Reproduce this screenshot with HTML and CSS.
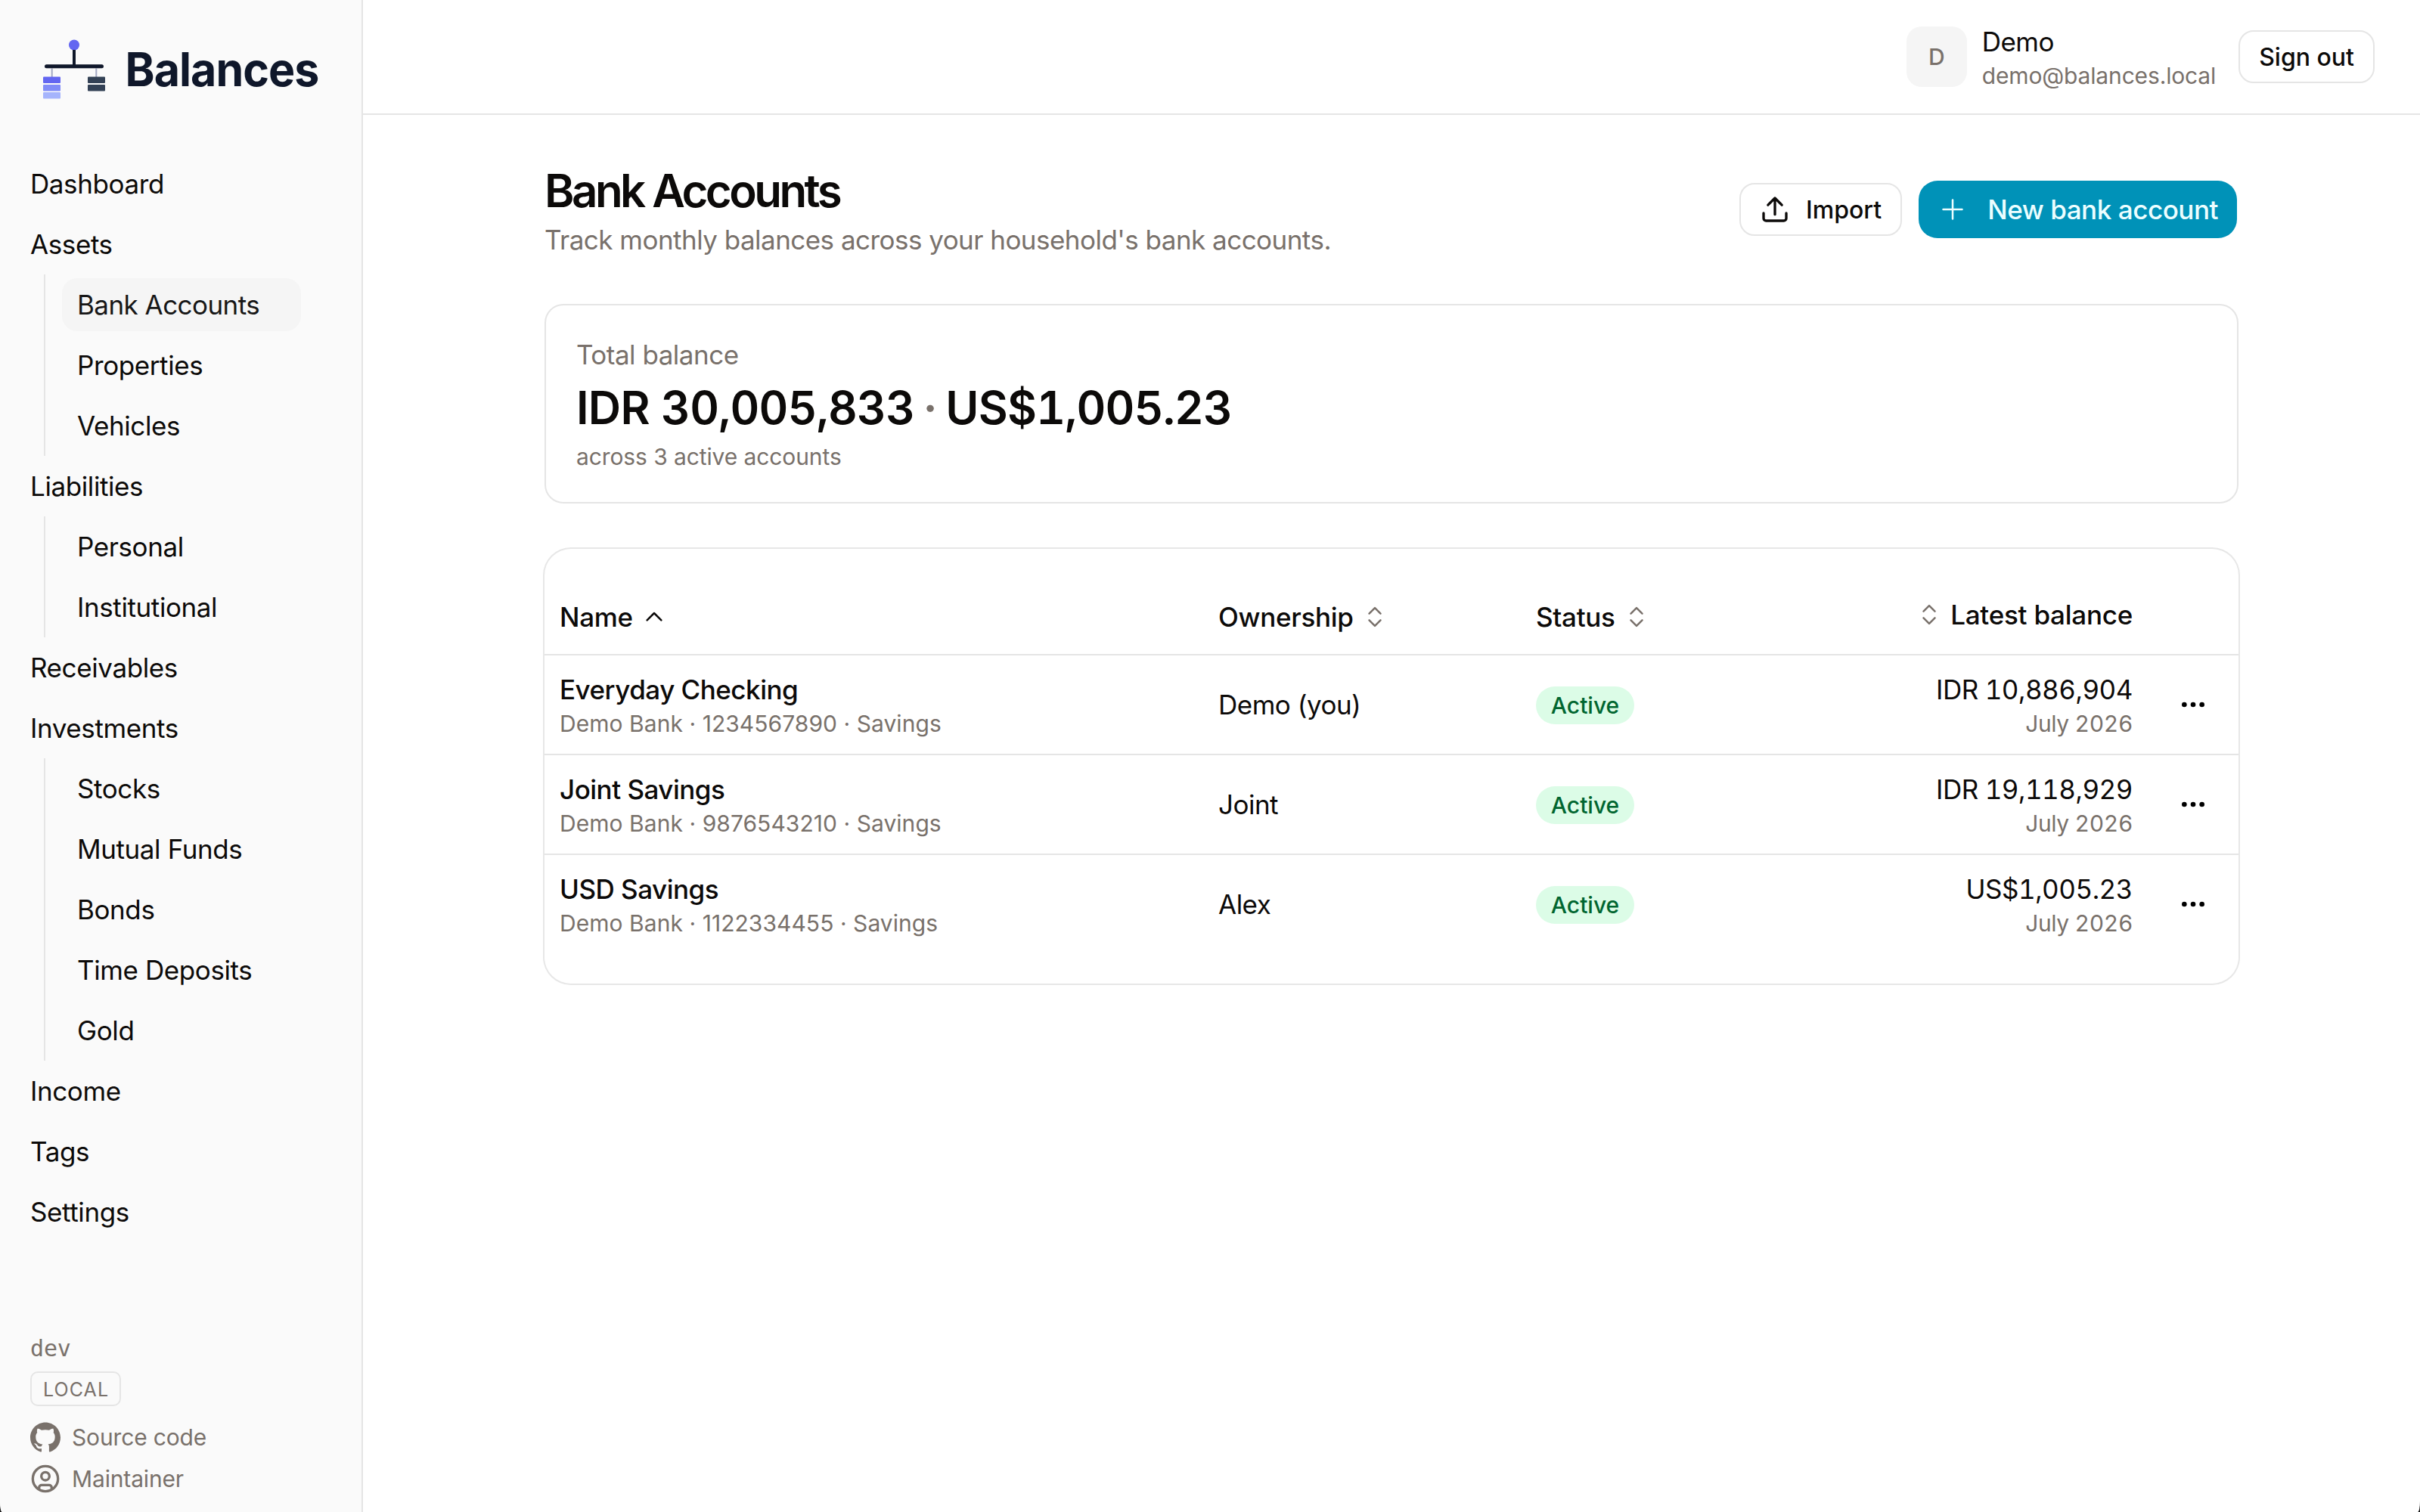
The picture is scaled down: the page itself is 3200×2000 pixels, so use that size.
FILE: index.html
```
<!DOCTYPE html>
<html lang="en">
<head>
  <meta charset="UTF-8" />
  <meta name="viewport" content="width=device-width, initial-scale=1" />
  <title>Bank Accounts - Balances</title>
  <link rel="stylesheet" href="styles.css">
</head>
<body>
  <aside class="sidebar">
    <a class="brand" href="#">
      <svg class="brand-logo" viewBox="0 0 400 90">
        <circle cx="53" cy="14.500" r="7" fill="#6366f1" />
        <path d="M53 21V44" stroke="#0f172a" stroke-width="4" />
        <path d="M23.700 45.500V58M82.300 45.500V58" stroke="#a3a8c3" stroke-width="2" />
        <path d="M16.500 42.700H89.500" stroke="#0f172a" stroke-width="5" stroke-linecap="round" />
        <rect x="12" y="56.500" width="23" height="8.500" rx="1" fill="#6366f1" />
        <rect x="12" y="67" width="23" height="8.500" rx="1" fill="#818cf8" />
        <rect x="12" y="77" width="23" height="8.500" rx="1" fill="#a5b4fc" />
        <rect x="71" y="56.500" width="23" height="8.500" rx="1" fill="#334155" />
        <rect x="71" y="67" width="23" height="8.500" rx="1" fill="#334155" />
        <text class="brand-name" x="120.500" y="69" textLength="256" lengthAdjust="spacingAndGlyphs">Balances</text>
      </svg>
    </a>

    <nav class="nav">
      <a href="#">Dashboard</a>
      <a href="#">Assets</a>
      <div class="subnav">
        <a class="active" href="#">Bank Accounts</a>
        <a href="#">Properties</a>
        <a href="#">Vehicles</a>
      </div>
      <a href="#">Liabilities</a>
      <div class="subnav">
        <a href="#">Personal</a>
        <a href="#">Institutional</a>
      </div>
      <a href="#">Receivables</a>
      <a href="#">Investments</a>
      <div class="subnav">
        <a href="#">Stocks</a>
        <a href="#">Mutual Funds</a>
        <a href="#">Bonds</a>
        <a href="#">Time Deposits</a>
        <a href="#">Gold</a>
      </div>
      <a href="#">Income</a>
      <a href="#">Tags</a>
      <a href="#">Settings</a>
    </nav>

    <div class="sidebar-footer">
      <span class="version">dev</span>
      <span class="env">LOCAL</span>
      <a href="#">
        <svg class="icon" viewBox="0 0 24 24" fill="currentColor"><path d="M12 .297c-6.630 0-12 5.373-12 12 0 5.303 3.438 9.800 8.205 11.385.600.113.820-.258.820-.577 0-.285-.010-1.040-.015-2.040-3.338.724-4.042-1.610-4.042-1.610C4.422 18.070 3.633 17.700 3.633 17.700c-1.087-.744.084-.729.084-.729 1.205.084 1.838 1.236 1.838 1.236 1.070 1.835 2.809 1.305 3.495.998.108-.776.417-1.305.760-1.605-2.665-.300-5.466-1.332-5.466-5.930 0-1.310.465-2.380 1.235-3.220-.135-.303-.540-1.523.105-3.176 0 0 1.005-.322 3.300 1.230.960-.267 1.980-.399 3-.405 1.020.006 2.040.138 3 .405 2.280-1.552 3.285-1.230 3.285-1.230.645 1.653.240 2.873.120 3.176.765.840 1.230 1.910 1.230 3.220 0 4.610-2.805 5.625-5.475 5.920.420.360.810 1.096.810 2.220 0 1.606-.015 2.896-.015 3.286 0 .315.210.690.825.570C20.565 22.092 24 17.592 24 12.297c0-6.627-5.373-12-12-12" /></svg>
        Source code
      </a>
      <a href="#">
        <svg class="icon" viewBox="0 0 24 24" fill="none" stroke="currentColor" stroke-width="2"><circle cx="12" cy="12" r="10" /><circle cx="12" cy="10" r="3.200" /><path d="M7 20.400V19a2 2 0 0 1 2-2h6a2 2 0 0 1 2 2v1.400" /></svg>
        Maintainer
      </a>
    </div>
  </aside>

  <div class="page">
    <header class="topbar">
      <div class="avatar">D</div>
      <div class="user">
        <div class="user-name">Demo</div>
        <div class="user-email">demo@balances.local</div>
      </div>
      <button class="btn">Sign out</button>
    </header>

    <main>
      <div class="page-header">
        <div>
          <h1>Bank Accounts</h1>
          <p>Track monthly balances across your household's bank accounts.</p>
        </div>
        <div class="actions">
          <button class="btn btn-import">
            <svg class="icon" viewBox="0 0 24 24" fill="none" stroke="currentColor" stroke-width="2" stroke-linecap="round" stroke-linejoin="round"><path d="M12 16V3.500M6.500 8.500 12 3l5.500 5.500M21 15v4a2 2 0 0 1-2 2H5a2 2 0 0 1-2-2v-4" /></svg>
            Import
          </button>
          <button class="btn btn-primary">
            <svg class="icon" viewBox="0 0 24 24" fill="none" stroke="currentColor" stroke-width="1.500" stroke-linecap="round"><path d="M12 4.500v15M4.500 12h15" /></svg>
            New bank account
          </button>
        </div>
      </div>

      <section class="summary">
        <div class="summary-label">Total balance</div>
        <div class="summary-total">IDR 30,005,833 <span>·</span> US$1,005.23</div>
        <div class="summary-note">across 3 active accounts</div>
      </section>

      <section class="accounts">
        <table>
          <colgroup>
            <col class="col-name">
            <col class="col-owner">
            <col class="col-status">
            <col class="col-balance">
            <col class="col-menu">
          </colgroup>
          <thead>
            <tr>
              <th><span class="sort">Name <svg class="sort-icon" viewBox="0 0 24 24"><path d="m4.500 15.500 7.500-7.500 7.500 7.500" /></svg></span></th>
              <th><span class="sort">Ownership <svg class="sort-icon muted" viewBox="0 0 24 24"><path d="m6 8.500 6-6 6 6M6 15.500l6 6 6-6" /></svg></span></th>
              <th><span class="sort">Status <svg class="sort-icon muted" viewBox="0 0 24 24"><path d="m6 8.500 6-6 6 6M6 15.500l6 6 6-6" /></svg></span></th>
              <th class="num"><span class="sort"><svg class="sort-icon muted" viewBox="0 0 24 24"><path d="m6 8.500 6-6 6 6M6 15.500l6 6 6-6" /></svg> Latest balance</span></th>
              <th></th>
            </tr>
          </thead>
          <tbody>
            <tr>
              <td><div class="account">Everyday Checking</div><div class="detail">Demo Bank · 1234567890 · Savings</div></td>
              <td>Demo (you)</td>
              <td><span class="badge">Active</span></td>
              <td class="num"><div>IDR 10,886,904</div><div class="detail">July 2026</div></td>
              <td class="menu"><svg viewBox="0 0 24 24"><circle cx="5" cy="12" r="2" /><circle cx="12" cy="12" r="2" /><circle cx="19" cy="12" r="2" /></svg></td>
            </tr>
            <tr>
              <td><div class="account">Joint Savings</div><div class="detail">Demo Bank · 9876543210 · Savings</div></td>
              <td>Joint</td>
              <td><span class="badge">Active</span></td>
              <td class="num"><div>IDR 19,118,929</div><div class="detail">July 2026</div></td>
              <td class="menu"><svg viewBox="0 0 24 24"><circle cx="5" cy="12" r="2" /><circle cx="12" cy="12" r="2" /><circle cx="19" cy="12" r="2" /></svg></td>
            </tr>
            <tr>
              <td><div class="account">USD Savings</div><div class="detail">Demo Bank · 1122334455 · Savings</div></td>
              <td>Alex</td>
              <td><span class="badge">Active</span></td>
              <td class="num"><div>US$1,005.23</div><div class="detail">July 2026</div></td>
              <td class="menu"><svg viewBox="0 0 24 24"><circle cx="5" cy="12" r="2" /><circle cx="12" cy="12" r="2" /><circle cx="19" cy="12" r="2" /></svg></td>
            </tr>
          </tbody>
        </table>
      </section>
    </main>
  </div>
</body>
</html>
```
FILE: styles.css
```
* {
  box-sizing: border-box;
}
html {
  overflow: hidden;
  background: #1a1a1a;
}
body {
  margin: 0;
  display: flex;
  height: 2000px;
  overflow: hidden;
  border-radius: 0 0 3px 3px / 0 0 14px 14px;
  background: #fff;
  color: #0c0a09;
  font-family: Inter, "Liberation Sans", sans-serif;
  font-size: 35px;
  line-height: 50px;
  letter-spacing: -0.5px;
}
a {
  color: inherit;
  text-decoration: none;
}
h1, p {
  margin: 0;
}

/* sidebar */
.sidebar {
  display: flex;
  flex-direction: column;
  width: 480px;
  flex-shrink: 0;
  padding: 45px 20px 17px;
  background: #fafafa;
  border-right: 2px solid #e5e5e5;
}
.brand {
  display: block;
  height: 90px;
  margin-left: 25px;
}
.brand-logo {
  display: block;
  width: 400px;
  height: 90px;
}
.brand-name {
  font-size: 62px;
  font-weight: 700;
  letter-spacing: -1px;
  fill: #0f172a;
}
.nav {
  display: flex;
  flex-direction: column;
  gap: 10px;
  margin-top: 73px;
  letter-spacing: -0.4px;
}
.nav a {
  display: block;
  height: 70px;
  padding: 10px 20px;
  border-radius: 20px;
}
.subnav {
  display: flex;
  flex-direction: column;
  gap: 10px;
  width: 340px;
  margin: -5px 0 -5px 38px;
  padding: 5px 0 5px 22px;
  border-left: 2px solid #e5e5e5;
}
.nav .active {
  background: #f5f5f5;
  color: #171717;
  letter-spacing: -0.550px;
}
.sidebar-footer {
  display: flex;
  flex-direction: column;
  align-items: flex-start;
  margin-top: auto;
  padding: 0 20px;
  color: #79716b;
  font-size: 30px;
  line-height: 40px;
  letter-spacing: -0.150px;
}
.version {
  font-family: "DejaVu Sans Mono", monospace;
}
.env {
  height: 46px;
  margin: 10px 0 13px;
  padding: 1px 14px 0 15px;
  border: 2px solid #e5e5e5;
  border-radius: 10px;
  font-size: 25px;
  line-height: 42px;
  letter-spacing: 1.100px;
}
.sidebar-footer a {
  display: flex;
  align-items: center;
  gap: 15px;
  height: 55px;
}
.icon {
  width: 40px;
  height: 40px;
  flex-shrink: 0;
}

/* top bar */
.page {
  flex: 1;
}
.topbar {
  display: flex;
  align-items: center;
  justify-content: flex-end;
  height: 152px;
  padding: 0 60px;
  border-bottom: 2px solid #e5e5e5;
}
.avatar {
  width: 80px;
  height: 80px;
  margin-right: 20px;
  border-radius: 20px;
  background: #f5f5f5;
  color: #79716b;
  font-size: 30px;
  font-weight: 500;
  line-height: 80px;
  text-align: center;
}
.user {
  margin-right: 30px;
}
.user-email {
  color: #79716b;
  font-size: 30px;
  line-height: 40px;
  letter-spacing: -0.150px;
}
.btn {
  display: flex;
  align-items: center;
  height: 70px;
  padding: 0 25px;
  border: 2px solid #e5e5e5;
  border-radius: 20px;
  background: #fff;
  color: #0c0a09;
  font: 500 32px Inter, "Liberation Sans", sans-serif;
}
.btn-import {
  gap: 21px;
}
.btn-primary {
  gap: 26px;
  height: 76px;
  border: 0;
  border-radius: 25px;
  background: #0092b8;
  color: #ecfeff;
  font-size: 35px;
  letter-spacing: -0.450px;
}

/* content */
main {
  width: 2240px;
  margin: 60px auto 0;
}
.page-header {
  display: flex;
  align-items: center;
  justify-content: space-between;
  height: 130px;
}
.page-header h1 {
  font-size: 60px;
  font-weight: 600;
  line-height: 80px;
  letter-spacing: -3.550px;
}
.page-header p {
  color: #79716b;
  letter-spacing: -0.530px;
}
.actions {
  display: flex;
  align-items: center;
  gap: 22px;
  margin-right: 2px;
}
.summary {
  height: 264px;
  margin-top: 60px;
  padding: 40px;
  border: 2px solid #e5e5e5;
  border-radius: 25px;
}
.summary-label {
  color: #79716b;
}
.summary-total {
  margin: 5px 0;
  font-size: 60px;
  font-weight: 600;
  line-height: 80px;
  letter-spacing: -0.770px;
  font-variant-numeric: tabular-nums;
}
.summary-total span {
  margin: 0 -4px;
  color: #79716b;
}
.summary-note {
  color: #79716b;
  font-size: 30px;
  line-height: 40px;
  letter-spacing: -0.100px;
}

/* accounts table */
.accounts {
  margin-top: 60px;
  padding: 40px 0;
  border-radius: 35px;
  box-shadow: 0 0 0 2px #e7e7e7;
}
table {
  width: 100%;
  table-layout: fixed;
  border-spacing: 0;
}
.col-name { width: 871px; }
.col-owner { width: 420px; }
.col-status { width: 397px; }
.col-balance { width: 432px; }
.col-menu { width: 120px; }
th, td {
  padding: 0 20px;
  text-align: left;
}
th {
  height: 101px;
  border-bottom: 2px solid #e5e5e5;
  font-weight: 500;
  letter-spacing: -0.3px;
}
th.num {
  padding-bottom: 3px;
  letter-spacing: -0.250px;
}
td {
  height: 132px;
  border-bottom: 2px solid #e5e5e5;
}
tr:last-child td {
  height: 130px;
  border-bottom: 0;
}
.sort {
  display: inline-flex;
  align-items: center;
  gap: 13px;
}
.sort-icon {
  width: 30px;
  height: 30px;
  fill: none;
  stroke: currentColor;
  stroke-width: 2;
  stroke-linecap: round;
  stroke-linejoin: round;
}
.muted {
  color: #79716b;
}
.account {
  font-weight: 500;
}
.detail {
  color: #79716b;
  font-size: 30px;
  line-height: 40px;
  letter-spacing: 0.050px;
}
.num {
  text-align: right;
  font-variant-numeric: tabular-nums;
}
.num .detail {
  letter-spacing: -0.350px;
}
.badge {
  display: block;
  width: 130px;
  height: 50px;
  margin-top: 2px;
  border-radius: 25px;
  background: #dcfce7;
  color: #016630;
  font-size: 30px;
  font-weight: 500;
  letter-spacing: 0;
  text-align: center;
}
.menu {
  text-align: center;
}
.menu svg {
  display: block;
  width: 40px;
  height: 40px;
  margin: 0 auto;
}
```
